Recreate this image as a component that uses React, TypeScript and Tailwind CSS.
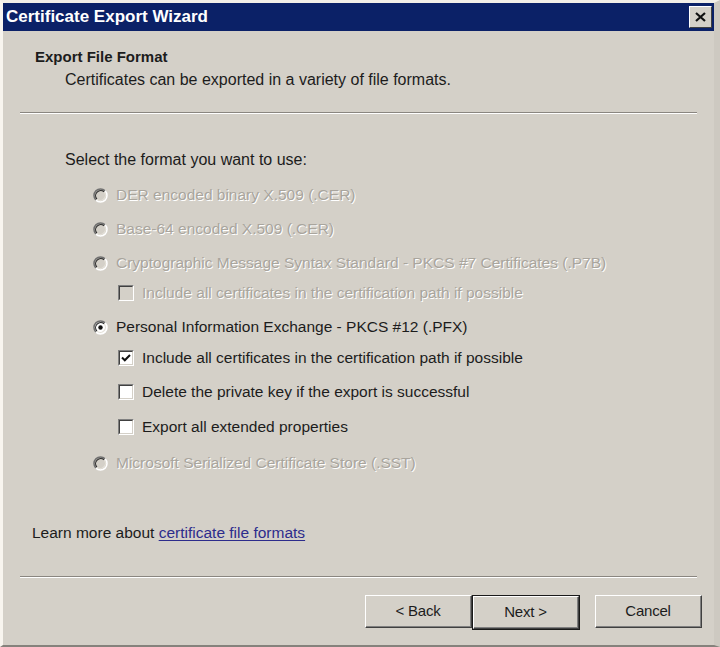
import React from "react";

const font = "font-['Liberation_Sans',Arial,sans-serif]";
const disabledText = "text-[#a9a59d] [text-shadow:1px_1px_0_#ffffff]";

function Radio({ checked = false, disabled = false }: { checked?: boolean; disabled?: boolean }) {
  return (
    <svg width="15" height="15" viewBox="0 0 15 15" className="shrink-0">
      <circle cx="7.5" cy="7.5" r="6.5" fill={disabled ? "#d4d0c8" : "#ffffff"} />
      <path d="M2.9 12.1 A6.5 6.5 0 0 1 12.1 2.9" fill="none" stroke="#707070" strokeWidth="1.5" />
      <path d="M12.1 2.9 A6.5 6.5 0 0 1 2.9 12.1" fill="none" stroke="#ffffff" strokeWidth="1.5" />
      <path d="M3.9 11.1 A5.1 5.1 0 0 1 11.1 3.9" fill="none" stroke="#303030" strokeWidth="1.2" />
      <path d="M11.1 3.9 A5.1 5.1 0 0 1 3.9 11.1" fill="none" stroke="#e4e0d8" strokeWidth="1.2" />
      {checked && <circle cx="7.5" cy="7.5" r="2.2" fill="#111111" />}
    </svg>
  );
}

function Checkbox({ checked = false, disabled = false }: { checked?: boolean; disabled?: boolean }) {
  return (
    <div className="w-[16px] h-[16px] shrink-0 border-t border-l border-t-[#808080] border-l-[#808080] border-b border-r border-b-white border-r-white">
      <div
        className={`w-full h-full border-t border-l border-t-[#404040] border-l-[#404040] border-b border-r border-b-[#d4d0c8] border-r-[#d4d0c8] flex items-center justify-center ${
          disabled ? "bg-[#d4d0c8]" : "bg-white"
        }`}
      >
        {checked && (
          <svg width="10" height="10" viewBox="0 0 10 10">
            <path d="M1 4.5 L3.8 7.3 L9 2" fill="none" stroke="#111111" strokeWidth="2" />
          </svg>
        )}
      </div>
    </div>
  );
}

function RadioRow({ label, checked, disabled, mt }: { label: string; checked?: boolean; disabled?: boolean; mt: string }) {
  return (
    <div className={`flex items-center h-[20px] pl-[90px] ${mt}`}>
      <Radio checked={checked} disabled={disabled} />
      <span className={`ml-[8px] ${disabled ? disabledText : "text-[#1c1c1c]"}`}>{label}</span>
    </div>
  );
}

function CheckRow({ label, checked, disabled, mt }: { label: string; checked?: boolean; disabled?: boolean; mt: string }) {
  return (
    <div className={`flex items-center h-[20px] pl-[115px] ${mt}`}>
      <Checkbox checked={checked} disabled={disabled} />
      <span className={`ml-[8px] ${disabled ? disabledText : "text-[#1c1c1c]"}`}>{label}</span>
    </div>
  );
}

function Separator({ className = "" }: { className?: string }) {
  return (
    <div className={`mx-[17px] ${className}`}>
      <div className="h-px bg-[#8a8680]" />
      <div className="h-px bg-white" />
    </div>
  );
}

function Button({ label, primary = false }: { label: string; primary?: boolean }) {
  return (
    <div className={primary ? "border border-[#1a1a1a]" : ""}>
      <div
        className={`flex items-center justify-center bg-[#d4d0c8] border-t border-l border-t-white border-l-white border-b border-r border-b-[#404040] border-r-[#404040] ${
          primary ? "w-[106px] h-[33px]" : "w-[107px] h-[33px]"
        }`}
      >
        <div className="w-full h-full flex items-center justify-center border-b border-r border-b-[#808080] border-r-[#808080] text-[#1c1c1c] text-[15px] tracking-[-0.2px]">
          {label}
        </div>
      </div>
    </div>
  );
}

export default function App() {
  return (
    <div
      className={`${font} w-[720px] h-[647px] bg-[#d4d0c8] flex flex-col border-l-[3px] border-l-[#f8f5ef] border-t-[3px] border-t-[#f2efe8] border-r-[6px] border-r-[#cdc9c1] border-b-[2px] border-b-[#85827c] text-[16px] overflow-hidden`}
    >
      <div className="h-[28px] bg-[#0b2167] flex items-center justify-between pl-[3px] pr-[2px] shrink-0">
        <span className="text-white font-bold text-[17px]">Certificate Export Wizard</span>
        <div className="w-[23px] h-[22px] bg-[#d4d0c8] border-t border-l border-t-white border-l-white border-b border-r border-b-[#404040] border-r-[#404040] flex items-center justify-center">
          <svg width="11" height="10" viewBox="0 0 11 10">
            <path d="M1 1 L10 9 M10 1 L1 9" stroke="#111111" strokeWidth="2.2" />
          </svg>
        </div>
      </div>

      <div className="mt-[17px] h-[18px] flex items-center pl-[32px] font-bold text-[15px] text-[#1c1c1c]">
        Export File Format
      </div>
      <div className="mt-[4px] h-[20px] flex items-center pl-[62px] text-[#1c1c1c]">
        Certificates can be exported in a variety of file formats.
      </div>
      <Separator className="mt-[22px]" />

      <div className="mt-[36px] h-[20px] flex items-center pl-[62px] text-[#1c1c1c]">
        Select the format you want to use:
      </div>

      <div className="text-[15.5px]">
        <RadioRow label="DER encoded binary X.509 (.CER)" disabled mt="mt-[15px]" />
        <RadioRow label="Base-64 encoded X.509 (.CER)" disabled mt="mt-[14px]" />
        <RadioRow label="Cryptographic Message Syntax Standard - PKCS #7 Certificates (.P7B)" disabled mt="mt-[14px]" />
        <CheckRow label="Include all certificates in the certification path if possible" disabled mt="mt-[10px]" />
        <RadioRow label="Personal Information Exchange - PKCS #12 (.PFX)" checked mt="mt-[14px]" />
        <CheckRow label="Include all certificates in the certification path if possible" checked mt="mt-[11px]" />
        <CheckRow label="Delete the private key if the export is successful" mt="mt-[14px]" />
        <CheckRow label="Export all extended properties" mt="mt-[15px]" />
        <RadioRow label="Microsoft Serialized Certificate Store (.SST)" disabled mt="mt-[16px]" />
      </div>

      <div className="mt-[50px] h-[20px] flex items-center pl-[29px] text-[15.5px] text-[#1c1c1c]">
        Learn more about&nbsp;
        <span className="text-[#2d2c8c] underline underline-offset-2">certificate file formats</span>
      </div>

      <Separator className="mt-[33px]" />

      <div className="mt-[17px] flex justify-end pr-[12px]">
        <Button label="< Back" />
        <Button label="Next >" primary />
        <div className="w-[15px]" />
        <Button label="Cancel" />
      </div>
    </div>
  );
}
